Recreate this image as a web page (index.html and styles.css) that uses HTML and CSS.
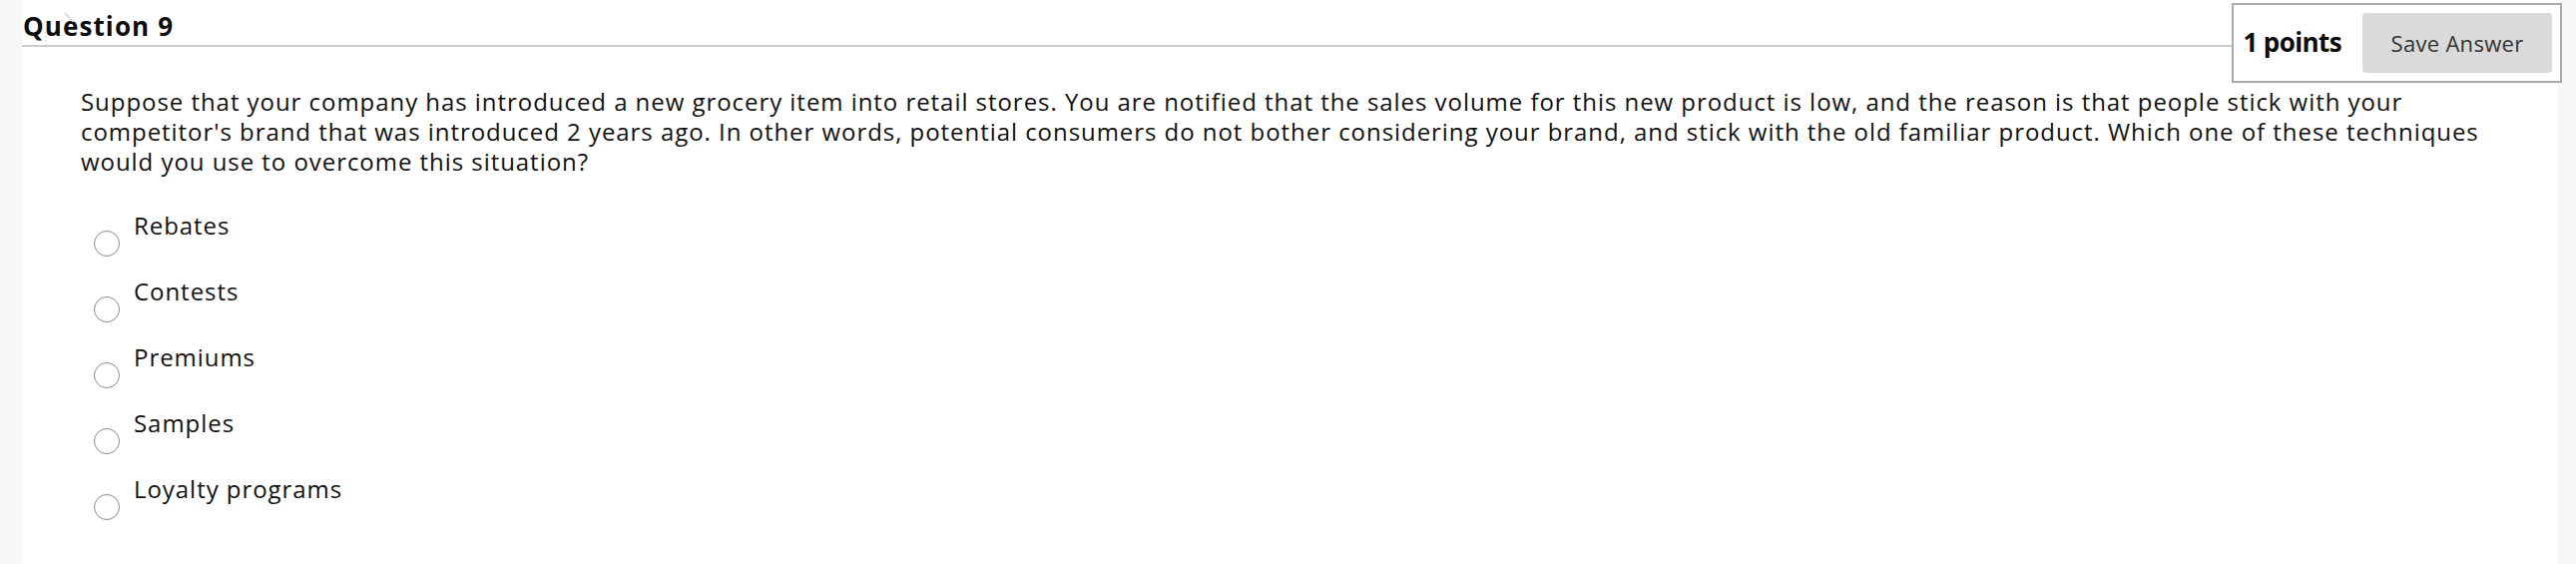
FILE: index.html
```html
<!DOCTYPE html>
<html lang="en">
<head>
<meta charset="utf-8">
<title>Question 9</title>
<link rel="stylesheet" href="styles.css">
</head>
<body>
<div class="page">
  <div class="panel">
    <div class="q-header">
      <h2 class="q-title">Question 9</h2>
      <div class="points-box">
        <span class="points">1 points</span>
        <button class="save-btn" type="button">Save Answer</button>
      </div>
    </div>
    <div class="q-body">
      <p class="q-text">Suppose that your company has introduced a new grocery item into retail stores. You are notified that the sales volume for this new product is low, and the reason is that people stick with your competitor's brand that was introduced 2 years ago. In other words, potential consumers do not bother considering your brand, and stick with the old familiar product. Which one of these techniques would you use to overcome this situation?</p>
      <ul class="options">
        <li class="option"><input class="radio" type="radio" name="q9"><span class="label">Rebates</span></li>
        <li class="option"><input class="radio" type="radio" name="q9"><span class="label">Contests</span></li>
        <li class="option"><input class="radio" type="radio" name="q9"><span class="label">Premiums</span></li>
        <li class="option"><input class="radio" type="radio" name="q9"><span class="label">Samples</span></li>
        <li class="option"><input class="radio" type="radio" name="q9"><span class="label">Loyalty programs</span></li>
      </ul>
    </div>
    <svg class="cursor-ghost" width="60" height="50" viewBox="0 0 60 50" aria-hidden="true">
      <line x1="24" y1="28" x2="24" y2="46" stroke="#c8c8c8" stroke-width="1" stroke-dasharray="2 2"/>
      <line x1="43" y1="13" x2="51" y2="22" stroke="#cfcfcf" stroke-width="1.2"/>
    </svg>
  </div>
</div>
</body>
</html>
```

FILE: styles.css
```css
html, body {
  margin: 0;
  padding: 0;
}

body {
  background: #f7f7f7;
  font-family: "Open Sans", "Noto Sans", "Liberation Sans", sans-serif;
  color: #111111;
}

.page {
  padding: 0 18px 0 22px;
  height: 565px;
  box-sizing: border-box;
}

.panel {
  position: relative;
  background: #ffffff;
  height: 100%;
}

.q-header {
  display: flex;
  align-items: flex-start;
}

.q-title {
  flex: 1;
  margin: 10px 0 0;
  padding: 0 0 3px 1px;
  font-size: 26px;
  font-weight: 700;
  line-height: 32px;
  letter-spacing: 1.1px;
  color: #0d0d0d;
  border-bottom: 2px solid #cccccc;
}

.points-box {
  display: flex;
  align-items: baseline;
  gap: 21px;
  margin: 3px -4px 0 0;
  padding: 8px 8px 8px 9px;
  border: 2px solid #aaaaaa;
  background: #ffffff;
}

.points {
  font-size: 26px;
  font-weight: 700;
  letter-spacing: -0.6px;
  color: #0d0d0d;
}

.save-btn {
  width: 190px;
  height: 60px;
  padding: 0;
  border: 0;
  border-radius: 4px;
  background: #dadada;
  color: #333333;
  font-family: "Open Sans", "Noto Sans", sans-serif;
  font-size: 22px;
  letter-spacing: 0.3px;
}

.q-body {
  padding: 0 53px 0 59px;
}

.q-text {
  margin: 4px 0 0;
  font-size: 24px;
  line-height: 30px;
  letter-spacing: 0.95px;
}

.options {
  list-style: none;
  margin: 34px 0 0;
  padding: 0;
}

.option {
  display: flex;
  align-items: flex-start;
  gap: 14px;
  height: 46px;
  margin-bottom: 20px;
}

.radio {
  appearance: none;
  -webkit-appearance: none;
  box-sizing: border-box;
  width: 26px;
  height: 26px;
  margin: 20px 0 0 13px;
  border: 1px solid #8c8c8c;
  border-radius: 50%;
  background: #fff;
}

.label {
  font-size: 24px;
  line-height: 30px;
  letter-spacing: 0.95px;
}

.cursor-ghost {
  position: absolute;
  left: 0;
  top: 0;
}
```
